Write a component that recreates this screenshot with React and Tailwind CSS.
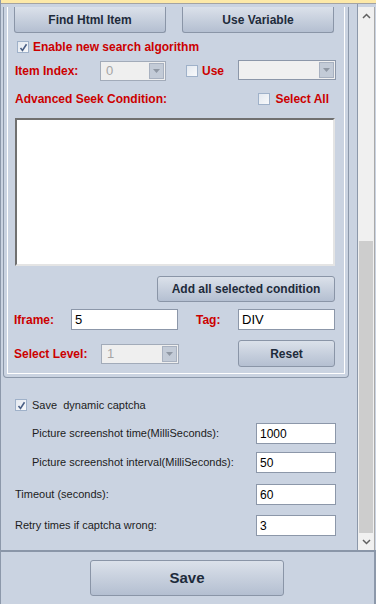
import React from "react";

const btn =
  "flex items-center justify-center rounded-[3px] border border-[#8a95a7] bg-gradient-to-b from-[#dbe1ea] to-[#b4bfd1] font-bold text-[#1e2b3b]";

function Check({ checked }) {
  return (
    <span className="flex h-[12px] w-[12px] shrink-0 items-center justify-center border border-[#9fb1c9] bg-gradient-to-br from-[#e4e9f0] to-[#f8f9fb]">
      {checked && (
        <svg width="9" height="9" viewBox="0 0 9 9">
          <path d="M1.5 5 L3.5 7.5 L7.5 1.2" fill="none" stroke="#4a5f85" strokeWidth="1.6" />
        </svg>
      )}
    </span>
  );
}

function DisabledSelect({ w, value }) {
  return (
    <div
      className={`flex h-[20px] items-center border border-[#a2abb9] bg-[#efefef] pl-[5px] pr-[1px] text-[13px] font-normal text-[#a5a5a5] ${w}`}
    >
      <span className="flex-1 leading-none">{value}</span>
      <span className="flex h-[16px] w-[15px] items-center justify-center border border-[#a8b1c0] bg-[#c3cbd7]">
        <svg width="7" height="4" viewBox="0 0 7 4">
          <path d="M0 0 L7 0 L3.5 4 Z" fill="#8f97a3" />
        </svg>
      </span>
    </div>
  );
}

function Field({ w, value, size = "text-[13px]" }) {
  return (
    <div
      className={`flex h-[21px] items-center border border-[#8c97a9] bg-white pl-[3px] font-normal text-black ${size} ${w}`}
    >
      {value}
    </div>
  );
}

function Row({ mt, indent, label, value }) {
  return (
    <div className={`flex h-[21px] items-center ${mt}`}>
      <span className={`flex-1 ${indent}`}>{label}</span>
      <Field w="w-[80px]" value={value} size="text-[12px]" />
      <span className="w-[21px]" />
    </div>
  );
}

export default function App() {
  return (
    <div
      className="flex h-[604px] w-[376px] flex-col overflow-hidden border-l border-[#8c98aa] bg-[#cad3e1]"
      style={{ fontFamily: '"Liberation Sans", Arial, sans-serif' }}
    >
      <div className="h-[3px] shrink-0 bg-[#fde9a8]" />
      <div className="h-px shrink-0 bg-[#a3a3a3]" />
      <div className="flex h-[546px] shrink-0">
        <div className="flex-1 overflow-hidden border-r border-[#8c98aa]">
          {/* group panel */}
          <div className="ml-[2px] w-[346px] rounded-b-[4px] border border-t-0 border-[#8c98aa] px-[3px] pb-[3px]">
            <div className="border border-t-0 border-white pb-[6px] text-[12px] font-bold text-[#cc0000]">
              <div className="mt-[3px] flex h-[26px]">
                <div className={`${btn} ml-[6px] w-[152px] rounded-t-none border-t-0 text-[12px]`}>
                  Find Html Item
                </div>
                <div className={`${btn} ml-[16px] w-[152px] rounded-t-none border-t-0 text-[12px]`}>
                  Use Variable
                </div>
              </div>

              <div className="ml-[9px] mt-[8px] flex h-[12px] items-center gap-[4px]">
                <Check checked />
                <span>Enable new search algorithm</span>
              </div>

              <div className="mt-[7px] flex h-[21px] items-center">
                <span className="ml-[7px] w-[85px]">Item Index:</span>
                <DisabledSelect w="w-[66px]" value="0" />
                <span className="ml-[20px]">
                  <Check />
                </span>
                <span className="ml-[4px] w-[36px]">Use</span>
                <div className="mb-[2px] flex h-[20px] w-[98px] items-center justify-end border border-[#8c97a9] bg-[#f0f0f0] pr-[1px]">
                  <span className="flex h-[16px] w-[15px] items-center justify-center border border-[#a8b1c0] bg-[#c3cbd7]">
                    <svg width="7" height="4" viewBox="0 0 7 4">
                      <path d="M0 0 L7 0 L3.5 4 Z" fill="#8f97a3" />
                    </svg>
                  </span>
                </div>
              </div>

              <div className="mt-[11px] flex h-[14px] items-center">
                <span className="ml-[7px] flex-1">Advanced Seek Condition:</span>
                <Check />
                <span className="ml-[5px] mr-[15px]">Select All</span>
              </div>

              <div className="ml-[7px] mt-[12px] h-[148px] w-[320px] border-2 border-b-[#e4e4e4] border-l-[#707070] border-r-[#e4e4e4] border-t-[#707070] bg-white" />

              <div className="mt-[10px] flex h-[26px]">
                <div className={`${btn} ml-[149px] w-[178px] text-[12px]`}>
                  Add all selected condition
                </div>
              </div>

              <div className="mt-[7px] flex h-[21px] items-center">
                <span className="ml-[6px] w-[57px]">Iframe:</span>
                <Field w="w-[107px]" value="5" />
                <span className="ml-[18px] w-[42px]">Tag:</span>
                <Field w="w-[97px]" value="DIV" />
              </div>

              <div className="mt-[10px] flex h-[27px] items-center">
                <span className="ml-[6px] w-[87px]">Select Level:</span>
                <DisabledSelect w="w-[78px]" value="1" />
                <div className={`${btn} ml-[59px] h-[27px] w-[97px] text-[12px]`}>Reset</div>
              </div>
            </div>
          </div>

          {/* captcha section */}
          <div className="text-[11px] text-[#1c1c1c]">
            <div className="ml-[14px] mt-[21px] flex h-[12px] items-center gap-[5px]">
              <Check checked />
              <span>Save&nbsp; dynamic captcha</span>
            </div>
            <Row mt="mt-[12px]" indent="ml-[31px]" label="Picture screenshot time(MilliSeconds):" value="1000" />
            <Row mt="mt-[8px]" indent="ml-[31px]" label="Picture screenshot interval(MilliSeconds):" value="50" />
            <Row mt="mt-[11px]" indent="ml-[14px]" label="Timeout (seconds):" value="60" />
            <Row mt="mt-[10px]" indent="ml-[14px]" label="Retry times if captcha wrong:" value="3" />
          </div>
        </div>

        {/* scrollbar */}
        <div className="mt-[3px] flex w-[17px] flex-col border-r border-[#a9a9a9] bg-[#f0f0f0]">
          <div className="flex h-[17px] items-center justify-center">
            <svg width="9" height="6" viewBox="0 0 9 6">
              <path d="M1 5 L4.5 1.5 L8 5" fill="none" stroke="#606060" strokeWidth="1.5" />
            </svg>
          </div>
          <div className="flex-1" />
          <div className="mx-px h-[292px] bg-[#cdcdcd]" />
          <div className="flex h-[17px] items-center justify-center">
            <svg width="9" height="6" viewBox="0 0 9 6">
              <path d="M1 1 L4.5 4.5 L8 1" fill="none" stroke="#606060" strokeWidth="1.5" />
            </svg>
          </div>
        </div>
        <div className="w-px" />
      </div>
      <div className="h-[2px] shrink-0 bg-[#8a96a8]" />
      <div className="flex flex-1 border-r-2 border-[#8c98aa] pt-[8px]">
        <div className={`${btn} ml-[89px] h-[36px] w-[194px] text-[15px]`}>Save</div>
      </div>
    </div>
  );
}
